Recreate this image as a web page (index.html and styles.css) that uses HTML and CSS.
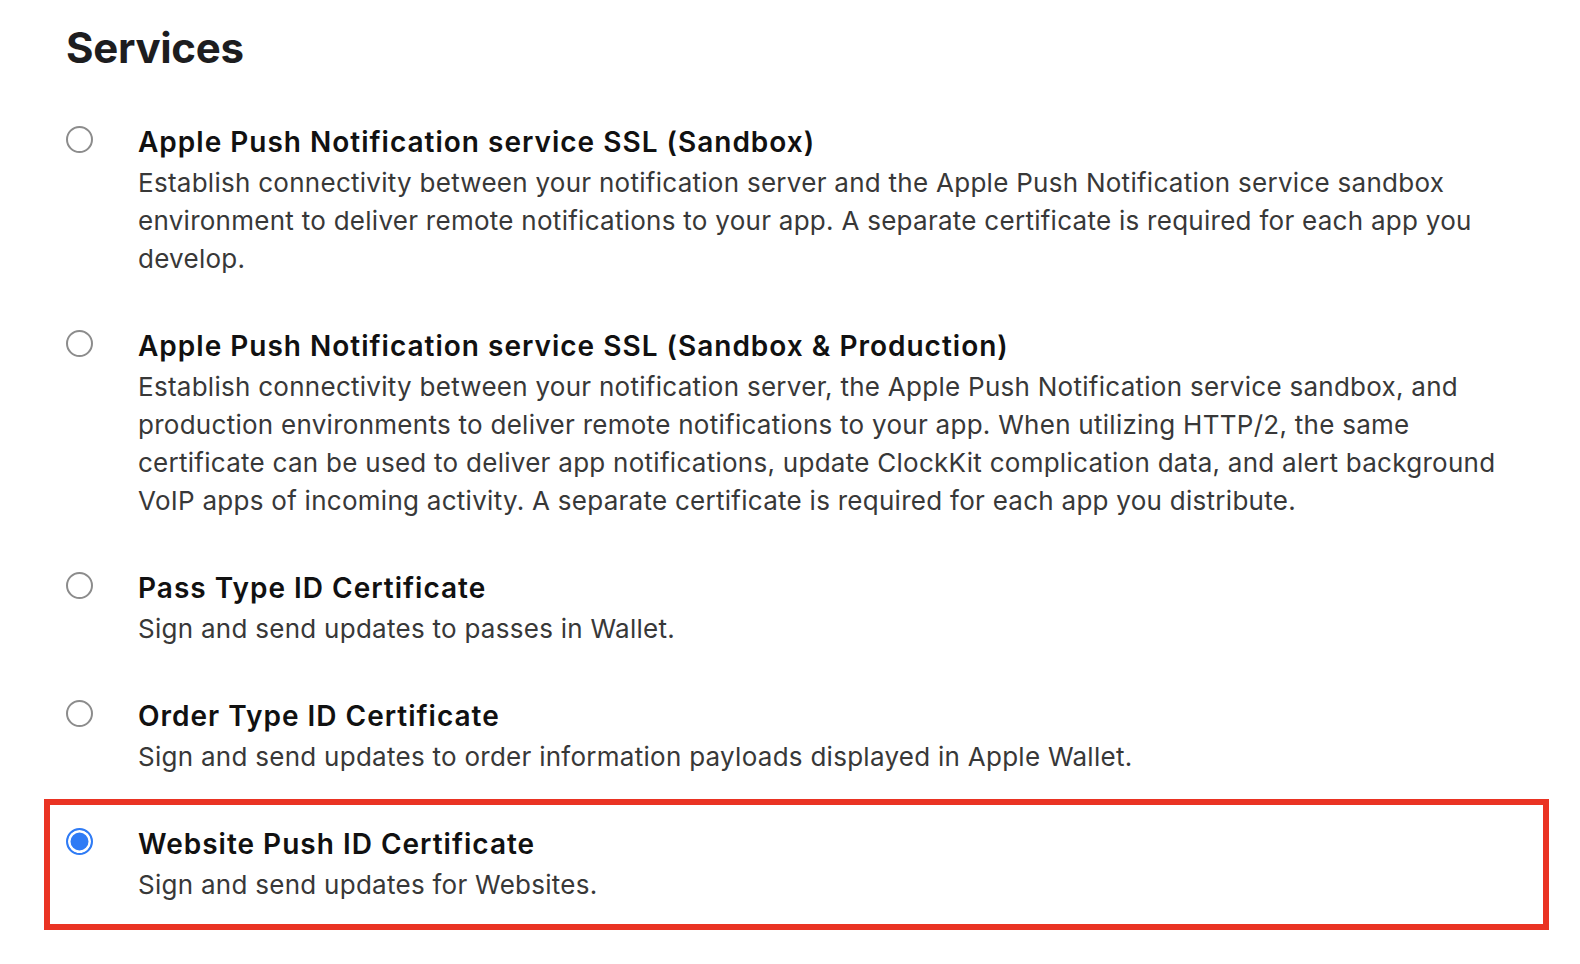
FILE: index.html
```html
<!DOCTYPE html>
<html lang="en">
<head>
    <meta charset="UTF-8">
    <meta name="viewport" content="width=device-width, initial-scale=1.0">
    <title>Services</title>
    <link rel="stylesheet" href="styles.css">
</head>
<body>
    <div class="page">
        <h1 class="heading">Services</h1>
        <div class="services">
            <label class="service">
                <input class="radio" type="radio" name="service">
                <div class="service-text">
                    <div class="service-title">Apple Push Notification service SSL (Sandbox)</div>
                    <div class="service-desc">Establish connectivity between your notification server and the Apple Push Notification service sandbox environment to deliver remote notifications to your app. A separate certificate is required for each app you develop.</div>
                </div>
            </label>
            <label class="service">
                <input class="radio" type="radio" name="service">
                <div class="service-text">
                    <div class="service-title">Apple Push Notification service SSL (Sandbox &amp; Production)</div>
                    <div class="service-desc">Establish connectivity between your notification server, the Apple Push Notification service sandbox, and production environments to deliver remote notifications to your app. When utilizing HTTP/2, the same certificate can be used to deliver app notifications, update ClockKit complication data, and alert background VoIP apps of incoming activity. A separate certificate is required for each app you distribute.</div>
                </div>
            </label>
            <label class="service">
                <input class="radio" type="radio" name="service">
                <div class="service-text">
                    <div class="service-title">Pass Type ID Certificate</div>
                    <div class="service-desc">Sign and send updates to passes in Wallet.</div>
                </div>
            </label>
            <label class="service">
                <input class="radio" type="radio" name="service">
                <div class="service-text">
                    <div class="service-title">Order Type ID Certificate</div>
                    <div class="service-desc">Sign and send updates to order information payloads displayed in Apple Wallet.</div>
                </div>
            </label>
            <label class="service selected">
                <input class="radio" type="radio" name="service" checked>
                <div class="service-text">
                    <div class="service-title">Website Push ID Certificate</div>
                    <div class="service-desc">Sign and send updates for Websites.</div>
                </div>
            </label>
        </div>
    </div>
</body>
</html>
```

FILE: styles.css
```css
body {
    margin: 0;
    padding: 0;
    background-color: #ffffff;
    font-family: Inter, "Noto Sans", sans-serif;
    color: #1d1d1f;
}

.page {
    padding: 23px 0 0 44px;
    width: 1505px;
}

.heading {
    margin: 0 0 30px 22px;
    font-size: 42px;
    line-height: 50px;
    font-weight: 700;
    letter-spacing: -0.3px;
    color: #1d1d1f;
}

.services {
    display: flex;
    flex-direction: column;
    margin-top: -6px;
}

.service {
    display: flex;
    align-items: flex-start;
    gap: 45px;
    padding: 18px 16px 17px;
    border: 6px solid transparent;
    cursor: pointer;
}

.service.selected {
    border-color: #ea3323;
    padding-bottom: 20px;
}

.radio {
    appearance: none;
    -webkit-appearance: none;
    flex: none;
    width: 27px;
    height: 27px;
    margin: 5px 0 0 0;
    border: 2px solid #8c8c8c;
    border-radius: 50%;
    background-color: #fff;
    box-sizing: border-box;
}

.radio:checked {
    border: 2.5px solid #2f7bf5;
    background-color: #2f7bf5;
    box-shadow: inset 0 0 0 2.5px #fff;
}

.service-text {
    flex: 1;
}

.service-title {
    font-size: 28px;
    line-height: 43px;
    font-weight: 600;
    letter-spacing: 1px;
    color: #111111;
}

.service-desc {
    font-size: 26px;
    line-height: 38px;
    letter-spacing: 0.27px;
    color: #383838;
}
```
